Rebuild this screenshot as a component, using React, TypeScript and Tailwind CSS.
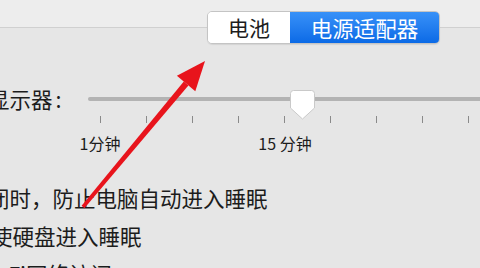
const ticks = [0, 1, 2, 3, 4, 5, 6, 7, 8];

function Arrow() {
  return (
    <svg
      className="absolute inset-0 pointer-events-none"
      width="480"
      height="268"
      viewBox="0 0 480 268"
    >
      <polygon
        points="84.4,208.2 81.6,205.8 183.8,81.6 188.4,85.4"
        fill="#e8141c"
      />
      <polygon points="205,61 176.9,75.8 195.3,91.2" fill="#e8141c" />
    </svg>
  );
}

export default function App() {
  return (
    <div className="relative w-[480px] h-[268px] overflow-hidden bg-[#e6e6e6] text-[#1c1c1c] font-['Noto_Sans_CJK_SC',sans-serif]">
      {/* top band */}
      <div className="h-[28px] bg-[#ededed] border-b border-[#d0d0d0]" />

      {/* segmented control */}
      <div className="-mt-[17px] ml-[207px] flex h-[33px] w-[233px] rounded-[5px] overflow-hidden border border-[#c4c4c4] shadow-[0_1px_1px_rgba(0,0,0,0.08)]">
        <div className="w-[82px] flex items-center justify-center bg-white text-[21px] leading-none">
          电池
        </div>
        <div className="flex-1 flex items-center justify-center bg-gradient-to-b from-[#3791f8] to-[#0a6ae6] text-white text-[21.5px] leading-none">
          电源适配器
        </div>
      </div>

      {/* slider row */}
      <div className="mt-[40px] flex items-center h-[30px]">
        <div className="-ml-[12px] w-[76px] shrink-0 text-[21.5px] leading-[30px] whitespace-nowrap">
          显示器<span className="ml-[3px]">:</span>
        </div>
        <div className="relative ml-[24px] -mr-[10px] flex-1 h-[4px] rounded-full bg-[#b3b3b3]">
          <svg
            className="absolute left-[202px] -top-[7px]"
            width="25"
            height="30"
            viewBox="0 0 25 30"
          >
            <path
              d="M3.5 0.5 H21.5 Q24.5 0.5 24.5 3.5 V18 L12.5 29 L0.5 18 V3.5 Q0.5 0.5 3.5 0.5 Z"
              fill="#ffffff"
              stroke="#c9c9c9"
              strokeWidth="1"
            />
          </svg>
        </div>
      </div>

      {/* ticks */}
      <div className="mt-[2px] flex pl-[100px] gap-[45px]">
        {ticks.map((t) => (
          <div key={t} className="w-px h-[7px] shrink-0 bg-[#8a8a8a]" />
        ))}
      </div>

      {/* tick labels */}
      <div className="mt-[9px] flex text-[16px] leading-[22px] whitespace-nowrap">
        <div className="ml-[70px] w-[60px] text-center">1分钟</div>
        <div className="ml-[125px] w-[60px] text-center">15 分钟</div>
      </div>

      {/* checkbox lines */}
      <div className="mt-[25px] flex flex-col text-[21.5px] leading-[38px] whitespace-nowrap">
        <div className="-ml-[12px]">闭时，防止电脑自动进入睡眠</div>
        <div className="-ml-[9px]">使硬盘进入睡眠</div>
        <div className="-ml-[24px]">Wi-Fi网络访问</div>
      </div>

      <Arrow />
    </div>
  );
}
